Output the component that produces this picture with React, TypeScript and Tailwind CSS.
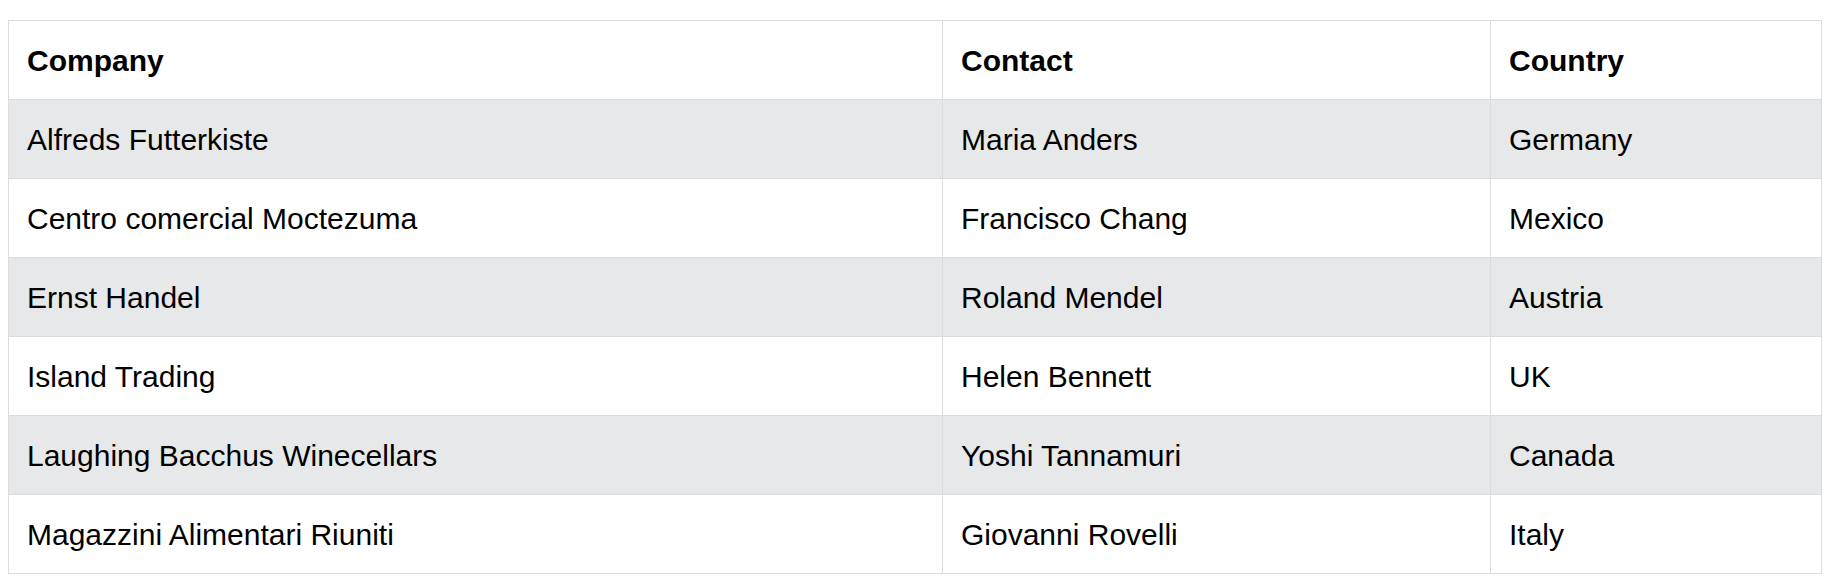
const rows = [
  ["Alfreds Futterkiste", "Maria Anders", "Germany"],
  ["Centro comercial Moctezuma", "Francisco Chang", "Mexico"],
  ["Ernst Handel", "Roland Mendel", "Austria"],
  ["Island Trading", "Helen Bennett", "UK"],
  ["Laughing Bacchus Winecellars", "Yoshi Tannamuri", "Canada"],
  ["Magazzini Alimentari Riuniti", "Giovanni Rovelli", "Italy"],
];

const cell = "border border-[#dddddd] h-[79px] pl-[18px] pr-4 pt-[2px] pb-0 text-left align-middle leading-[34px]";

export default function App() {
  return (
    <div className="bg-white min-h-screen px-2 pt-5 font-['Liberation_Sans',Arial,sans-serif] text-[30px] text-black">
      <table className="w-full table-fixed border-collapse border border-[#dddddd]">
        <colgroup>
          <col className="w-[934px]" />
          <col className="w-[548px]" />
          <col />
        </colgroup>
        <thead>
          <tr>
            <th className={`${cell} font-bold`}>Company</th>
            <th className={`${cell} font-bold`}>Contact</th>
            <th className={`${cell} font-bold`}>Country</th>
          </tr>
        </thead>
        <tbody>
          {rows.map((r, i) => (
            <tr key={r[0]} className={i % 2 === 0 ? "bg-[#e7e8ea]" : "bg-white"}>
              {r.map((c) => (
                <td key={c} className={cell}>
                  {c}
                </td>
              ))}
            </tr>
          ))}
        </tbody>
      </table>
    </div>
  );
}
